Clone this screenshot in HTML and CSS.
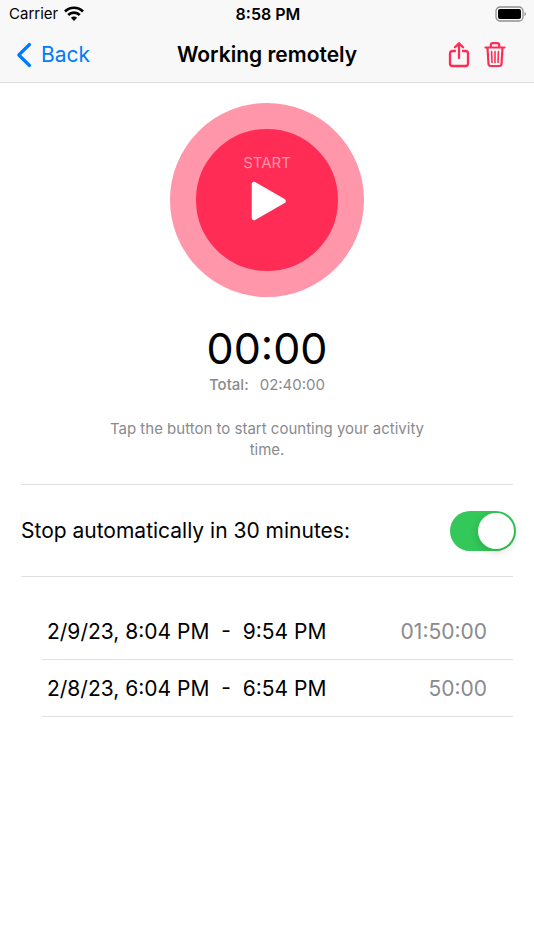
FILE: index.html
```html
<!DOCTYPE html>
<html lang="en">
<head>
    <meta charset="UTF-8">
    <meta name="viewport" content="width=device-width, initial-scale=1.0">
    <title>Working remotely</title>
    <link rel="stylesheet" href="styles.css">
</head>
<body>
    <header class="header">
        <div class="status-bar">
            <div class="carrier">
                <span>Carrier</span>
                <svg width="20" height="16" viewBox="0 0 20 16" fill="none" stroke="#000" stroke-width="2.7">
                    <path d="M1 5.500C6 .5 14 .5 19 5.500"/>
                    <path d="M4.200 9c3.300-3.200 8.300-3.200 11.600 0"/>
                    <path d="M6.900 11.700c1.700-1.700 4.500-1.700 6.200 0L10 15z" fill="#000" stroke="none"/>
                </svg>
            </div>
            <span class="clock">8:58 PM</span>
            <svg class="battery" width="32" height="16" viewBox="0 0 32 16">
                <rect x="1" y="1" width="27" height="14" rx="4" fill="none" stroke="#8e8e90" stroke-width="1.3"/>
                <rect x="3" y="3" width="23" height="10" rx="2" fill="#000"/>
                <path d="M29.500 6c2 .8 2 3.200 0 4z" fill="#8e8e90"/>
            </svg>
        </div>
        <nav class="nav-bar">
            <a class="back" href="#">
                <svg width="16" height="26" viewBox="0 0 16 26" fill="none" stroke="currentColor" stroke-width="3.2" stroke-linecap="round" stroke-linejoin="round">
                    <path d="M13.500 2.500L2.800 13l10.700 10.500"/>
                </svg>
                Back
            </a>
            <h1 class="title">Working remotely</h1>
            <div class="actions">
                <button class="icon-button" type="button" aria-label="Share">
                    <svg width="22" height="26" viewBox="0 0 22 26" fill="none" stroke="currentColor" stroke-width="2.3" stroke-linecap="round" stroke-linejoin="round">
                        <path d="M7 9H4.500Q2 9 2 11.500v10Q2 24 4.500 24h13q2.500 0 2.500-2.500v-10Q20 9 17.500 9H15"/>
                        <path d="M11 16V1.500M7 5.200l4-4 4 4"/>
                    </svg>
                </button>
                <button class="icon-button" type="button" aria-label="Delete">
                    <svg width="22" height="26" viewBox="0 0 22 26" fill="none" stroke="currentColor" stroke-width="2.2" stroke-linecap="round" stroke-linejoin="round">
                        <path d="M1.500 5.500h19M6.800 5V3q0-1.800 2-1.800h4.400q2 0 2 1.800v2"/>
                        <path d="M3.500 6l1 16q.1 2 2.200 2h8.600q2.100 0 2.200-2l1-16"/>
                        <path d="M7.600 9.500l.4 11M11 9.500v11M14.400 9.500l-.4 11" stroke-width="1.6"/>
                    </svg>
                </button>
            </div>
        </nav>
    </header>

    <main>
        <section class="timer">
            <button class="start-button" type="button">
                <span>START</span>
                <svg width="38" height="40" viewBox="0 0 38 40">
                    <path d="M6 3v34l29.500-17z" fill="#fff" stroke="#fff" stroke-width="4.5" stroke-linejoin="round"/>
                </svg>
            </button>
            <div class="time">00:00</div>
            <div class="total"><span class="total-label">Total:</span><span>02:40:00</span></div>
            <p class="hint">Tap the button to start counting your activity time.</p>
        </section>

        <div class="setting">
            <label for="auto-stop">Stop automatically in 30 minutes:</label>
            <input class="switch" type="checkbox" role="switch" id="auto-stop" checked>
        </div>

        <ul class="sessions">
            <li>
                <span class="period">2/9/23, 8:04 PM  -  9:54 PM</span>
                <span class="duration">01:50:00</span>
            </li>
            <li>
                <span class="period">2/8/23, 6:04 PM  -  6:54 PM</span>
                <span class="duration">50:00</span>
            </li>
        </ul>
    </main>
</body>
</html>
```

FILE: styles.css
```css
* {
    box-sizing: border-box;
}

body {
    margin: 0;
    background-color: #fff;
    color: #000;
    font-family: Inter, "Liberation Sans", sans-serif;
    font-size: 21px;
}

svg {
    display: block;
}

button {
    border: none;
    font-family: inherit;
    cursor: pointer;
}

/* header */
.header {
    background-color: #f8f8f8;
    border-bottom: 1px solid #dcdcdc;
}

.status-bar,
.nav-bar {
    display: grid;
    grid-template-columns: 1fr auto 1fr;
    align-items: center;
}

.status-bar {
    height: 27px;
    padding: 0 7px 0 9px;
    font-size: 15px;
}

.carrier {
    display: flex;
    align-items: center;
    gap: 6px;
}

.clock {
    font-size: 16px;
    font-weight: 600;
}

.battery {
    justify-self: end;
}

.nav-bar {
    height: 55px;
    padding: 0 16px;
}

.back {
    display: flex;
    align-items: center;
    gap: 9px;
    color: #007aff;
    text-decoration: none;
}

.title {
    margin: 0;
    font-size: 21px;
    font-weight: 600;
}

.actions {
    display: flex;
    justify-content: flex-end;
    gap: 14px;
    padding-right: 12px;
}

.icon-button {
    padding: 0;
    background: none;
    color: #ff2d55;
}

/* timer */
.timer {
    display: flex;
    flex-direction: column;
    align-items: center;
    padding: 20px 21px 24px;
    color: #8a8a8e;
    font-size: 15px;
}

.start-button {
    display: flex;
    flex-direction: column;
    align-items: center;
    gap: 8px;
    width: 194px;
    height: 194px;
    padding: 24px 0 0;
    border: 26px solid #ff96aa;
    border-radius: 50%;
    background-color: #ff2d55;
    color: #ff96aa;
    font-size: 15px;
    line-height: 20px;
}

.time {
    margin-top: 24px;
    color: #000;
    font-size: 43px;
    line-height: 54px;
}

.total {
    display: flex;
    gap: 11px;
    line-height: 20px;
}

.total-label {
    font-weight: 500;
}

.hint {
    max-width: 340px;
    margin: 23px 0 0;
    line-height: 21px;
    text-align: center;
}

/* auto stop */
.setting {
    display: flex;
    align-items: center;
    justify-content: space-between;
    height: 93px;
    margin: 0 21px;
    border-top: 1px solid #e2e2e3;
    border-bottom: 1px solid #e2e2e3;
}

.switch {
    appearance: none;
    width: 66px;
    height: 40px;
    margin: 0 -3px 0 0;
    padding: 2px;
    border-radius: 20px;
    background-color: #e9e9ea;
    cursor: pointer;
}

.switch::before {
    content: "";
    display: block;
    width: 36px;
    height: 36px;
    border-radius: 50%;
    background-color: #fff;
    box-shadow: 0 3px 8px rgba(0, 0, 0, 0.15);
}

.switch:checked {
    background-color: #34c759;
}

.switch:checked::before {
    margin-left: auto;
}

/* sessions */
.sessions {
    margin: 26px 21px 0 42px;
    padding: 0;
    list-style: none;
}

.sessions li {
    display: flex;
    align-items: center;
    justify-content: space-between;
    height: 57px;
    padding: 0 26px 0 5px;
    border-bottom: 1px solid #e2e2e3;
}

.period {
    white-space: pre;
}

.duration {
    color: #8a8a8e;
}
```
